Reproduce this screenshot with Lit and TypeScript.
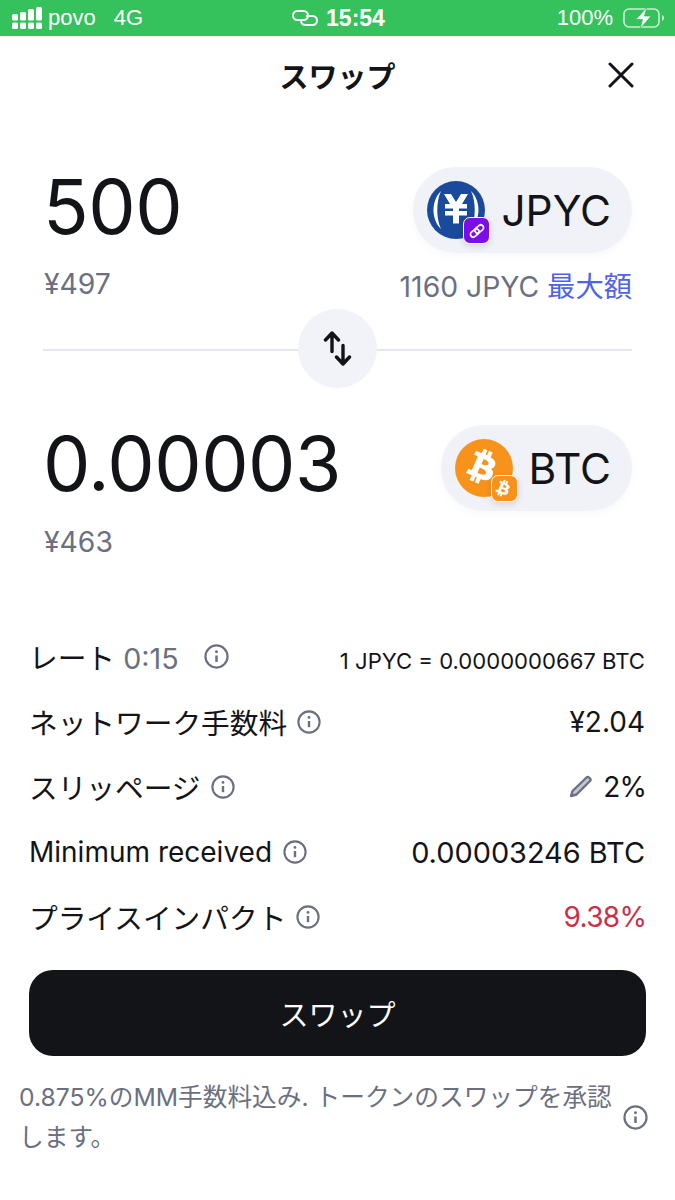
import { LitElement, html, css, svg } from "lit";
import { customElement } from "lit/decorators.js";

const info = (size = 24) => html`<svg class="info" width=${size} height=${size} viewBox="0 0 24 24" fill="none" stroke="#6b7080" stroke-width="2.1"><circle cx="12" cy="12" r="10.6"/><path d="M12 11v6.2" stroke-width="2.4"/><circle cx="12" cy="7.4" r="1.4" fill="#6b7080" stroke="none"/></svg>`;

const btcGlyph = svg`<path fill="#fff" stroke="#fff" stroke-width=".5" d="M17.3 10.6c.3-1.9-1.2-2.9-3.2-3.6l.7-2.6-1.6-.4-.6 2.5-1.3-.3.6-2.5-1.6-.4-.7 2.6-1-.3-2.2-.5-.4 1.7s1.2.3 1.2.3c.6.2.8.6.7.9l-.7 2.9-1 4.1c-.1.2-.3.5-.8.4l-1.2-.3-.8 1.800 2.100.5 1.100.3-.7 2.600 1.600.4.7-2.600 1.300.3-.7 2.600 1.600.4.7-2.600c2.700.5 4.800.3 5.600-2.200.7-2-.1-3.100-1.500-3.900 1.100-.2 1.900-.9 2.100-2.400zm-3.600 5.100c-.5 2-3.900.9-5 .7l.9-3.600c1.100.3 4.600.8 4.100 2.900zm.5-5.100c-.4 1.800-3.300.9-4.200.7l.8-3.200c.9.2 3.900.7 3.400 2.500z"/>`;

@customElement("app-root")
export class AppRoot extends LitElement {
  static styles = css`
    :host { display: block; width: 675px; height: 1200px; overflow: hidden; background: #fff; color: #131417;
      font-family: Inter, "Noto Sans CJK JP", sans-serif; }
    .status { height: 36px; background: #35c15b; color: #fff; display: grid; grid-template-columns: 1fr auto 1fr; align-items: center; padding: 0 10px 0 12px; font-family: "Liberation Sans", sans-serif; font-size: 22px; }
    .s-left, .s-right, .s-mid { display: flex; align-items: center; }
    .s-left { gap: 6px; }
    .s-left .net { margin-left: 12px; }
    .s-right { justify-content: flex-end; gap: 10px; }
    .s-mid { gap: 8px; font-weight: 700; font-size: 23px; }
    .header { height: 80px; margin-top: -1px; padding-bottom: 1px; box-sizing: content-box; display: flex; align-items: center; justify-content: center; position: relative; font-size: 29px; font-weight: 700; }
    .close { position: absolute; right: 41px; top: 27px; }
    .swap { padding: 51px 43px 0 43px; }
    .line { display: flex; justify-content: space-between; align-items: center; height: 86px; }
    .amount { font-size: 75.200px; letter-spacing: -0.5px; font-weight: 400; line-height: 86px; margin-top: -6px; }
    .second .amount { margin-top: -8px; }
    .pill { height: 86px; border-radius: 43px; background: #f1f2f7; display: flex; align-items: center; padding: 0 21px 0 14px; gap: 16px; font-size: 42.400px; font-weight: 400; box-shadow: 0 3px 8px rgba(20,24,40,.03); }
    .coin { position: relative; width: 58px; height: 58px; flex: none; }
    .coin svg { display: block; }
    .badge { position: absolute; right: -5px; bottom: -5px; width: 27px; height: 27px; border-radius: 7px; border: 1.5px solid #fff; box-sizing: border-box; display: flex; align-items: center; justify-content: center; box-shadow: 0 2px 6px rgba(20,24,40,.15); }
    .sub { display: flex; justify-content: space-between; align-items: center; color: #6b7080; font-size: 28.300px; height: 34px; margin-top: 14px; margin-left: 1px; }
    .max { color: #4f63e7; }
    .divider { height: 80px; margin: 7px 0 0 0; display: flex; align-items: center; justify-content: center; position: relative; }
    .divider::before { content: ""; position: absolute; left: 0; right: 0; top: 41px; height: 2px; background: #e6e7ec; }
    .flip { position: relative; width: 79px; height: 79px; border-radius: 50%; background: #f2f3f8; display: flex; align-items: center; justify-content: center; }
    .second { margin-top: 37px; }
    .sub.low { margin-top: 14px; }
    .rows { padding: 0 30px 0 29px; margin-top: 65px; display: flex; flex-direction: column; }
    .row { height: 65px; box-sizing: border-box; display: flex; align-items: center; justify-content: space-between; font-size: 28px; }
    .label { display: flex; align-items: center; gap: 10px; }
    .ja { font-size: 28.700px; }
    .muted { color: #6b7080; }
    .rate { font-size: 22.100px; padding-top: 8px; }
    .val { display: flex; align-items: center; gap: 11px; }
    .latin { padding-top: 1px; }
    .latin .label { gap: 11px; }
    .wide { font-size: 28.900px; }
    .red { color: #c9304a; letter-spacing: -.6px; margin-right: -1.500px; }
    .pct { letter-spacing: -.6px; margin-right: -1.500px; }
    .gap-big { margin-left: 15px; }
    .cta { margin: 21px 29px 0; height: 86px; border-radius: 24px; background: #131417; color: #fff; display: flex; align-items: center; justify-content: center; font-size: 29px; }
    .foot { display: flex; align-items: center; gap: 2px; padding: 21px 27px 0 19px; color: #6b7080; font-size: 24.700px; line-height: 40px; }
    .foot p { margin: 0; flex: 1; }
    .info { flex: none; display: block; }
  `;

  render() {
    return html`
      <div class="status">
        <div class="s-left">
          <svg width="30" height="22" viewBox="0 0 30 22" fill="#fff">
            <rect x="0" y="7" width="6" height="6.500" rx="1.500"/><rect x="0" y="15.500" width="6" height="6.500" rx="1.500"/>
            <rect x="8" y="5" width="6" height="8.500" rx="1.500"/><rect x="8" y="15.500" width="6" height="6.500" rx="1.500"/>
            <rect x="16" y="2" width="6" height="11.500" rx="1.500"/><rect x="16" y="15.500" width="6" height="6.500" rx="1.500"/>
            <rect x="24" y="0" width="6" height="13.500" rx="1.500"/><rect x="24" y="15.500" width="6" height="6.500" rx="1.500"/>
          </svg>
          <span>povo</span><span class="net">4G</span>
        </div>
        <div class="s-mid">
          <svg width="26" height="16" viewBox="0 0 26 16" fill="none" stroke="#fff" stroke-width="2"><rect x="1" y="1" width="15" height="9" rx="4.500"/><path d="M14 6h6.500a4.500 4.500 0 0 1 0 9H13.500a4.500 4.500 0 0 1-4.500-4.500"/></svg>
          <span>15:54</span>
        </div>
        <div class="s-right">
          <span>100%</span>
          <svg width="42" height="22" viewBox="0 0 42 22" fill="none"><rect x="1" y="2" width="35" height="18" rx="5" stroke="#fff" stroke-opacity=".75" stroke-width="1.600"/><path d="M39 8v6c1.400-.4 2-1.600 2-3s-.6-2.600-2-3z" fill="#fff" fill-opacity=".7"/><path d="M24 0 13 12.500h6.500L17 22l11-13h-6.500z" fill="#fff" stroke="#35c15b" stroke-width=".8"/></svg>
        </div>
      </div>

      <div class="header">
        <span>スワップ</span>
        <svg class="close" width="26" height="26" viewBox="0 0 26 26" stroke="#131417" stroke-width="3" stroke-linecap="round"><path d="M2 2l22 22M24 2 2 24"/></svg>
      </div>

      <div class="swap">
        <div class="line">
          <span class="amount">500</span>
          <div class="pill">
            <span class="coin">
              <svg width="58" height="58" viewBox="0 0 58 58">
                <circle cx="29" cy="29" r="29" fill="#1a4a9c"/>
                <path d="M14 10C4 20 4 38 14 48c-5-11-5-27 0-38zM44 10c10 10 10 28 0 38 5-11 5-27 0-38z" fill="#fff"/>
                <path d="M17 13h7l5 8 5-8h7l-6 10h5v4.500h-8v2.500h8v4.500h-8v8h-6v-8h-8V30h8v-2.500h-8V23h5z" fill="#fff"/>
              </svg>
              <span class="badge" style="background:#7a0de8">
                <svg width="18" height="18" viewBox="0 0 18 18" fill="none" stroke="#fff" stroke-width="1.700"><rect x="-4.800" y="-2.800" width="9.600" height="5.600" rx="2.800" transform="translate(6.800 11) rotate(-40)"/><rect x="-4.800" y="-2.800" width="9.600" height="5.600" rx="2.800" transform="translate(11.200 7) rotate(-40)"/></svg>
              </span>
            </span>
            <span>JPYC</span>
          </div>
        </div>
        <div class="sub"><span>¥497</span><span>1160 JPYC <span class="max">最大額</span></span></div>
        <div class="divider">
          <div class="flip">
            <svg width="29" height="35" viewBox="0 0 29 35" fill="none" stroke="#131417" stroke-width="3.400" stroke-linecap="round" stroke-linejoin="round"><path d="M2.500 9 9 2l6.500 7M9 3v17.500M13.500 26l6.500 7 6.500-7M20 32V14.500"/></svg>
          </div>
        </div>
        <div class="line second">
          <span class="amount">0.00003</span>
          <div class="pill">
            <span class="coin">
              <svg width="58" height="58" viewBox="0 0 58 58"><circle cx="29" cy="29" r="29" fill="#f7931a"/><g transform="translate(29 29) rotate(10) scale(1.900) translate(-12 -13)">${btcGlyph}</g></svg>
              <span class="badge" style="background:#f7931a">
                <svg width="22" height="22" viewBox="0 0 24 24"><g transform="rotate(10 12 12) translate(0 -1)">${btcGlyph}</g></svg>
              </span>
            </span>
            <span>BTC</span>
          </div>
        </div>
        <div class="sub low"><span>¥463</span></div>
      </div>

      <div class="rows">
        <div class="row"><div class="label"><span class="ja">レート <span class="muted">0:15</span></span><span class="gap-big">${info(25)}</span></div><div class="rate">1 JPYC = 0.0000000667 BTC</div></div>
        <div class="row"><div class="label"><span class="ja">ネットワーク手数料</span>${info()}</div><div>¥2.04</div></div>
        <div class="row"><div class="label"><span class="ja">スリッページ</span>${info()}</div>
          <div class="val">
            <svg width="23" height="23" viewBox="0 0 23 23" fill="#c4c7d0" stroke="#6b7080" stroke-width="2.400" stroke-linejoin="round"><path d="M17.500 2.500a1.800 1.800 0 0 1 2.500 0l1 1a1.800 1.800 0 0 1 0 2.500L7.500 19.500 2 21l1.500-5z"/></svg>
            <span class="pct">2%</span>
          </div></div>
        <div class="row latin"><div class="label"><span>Minimum received</span>${info()}</div><div class="wide">0.00003246 BTC</div></div>
        <div class="row"><div class="label"><span class="ja">プライスインパクト</span>${info()}</div><div class="red">9.38%</div></div>
      </div>

      <div class="cta">スワップ</div>
      <div class="foot"><p>0.875%のMM手数料込み. トークンのスワップを承認します。</p>${info(25)}</div>
    `;
  }
}
